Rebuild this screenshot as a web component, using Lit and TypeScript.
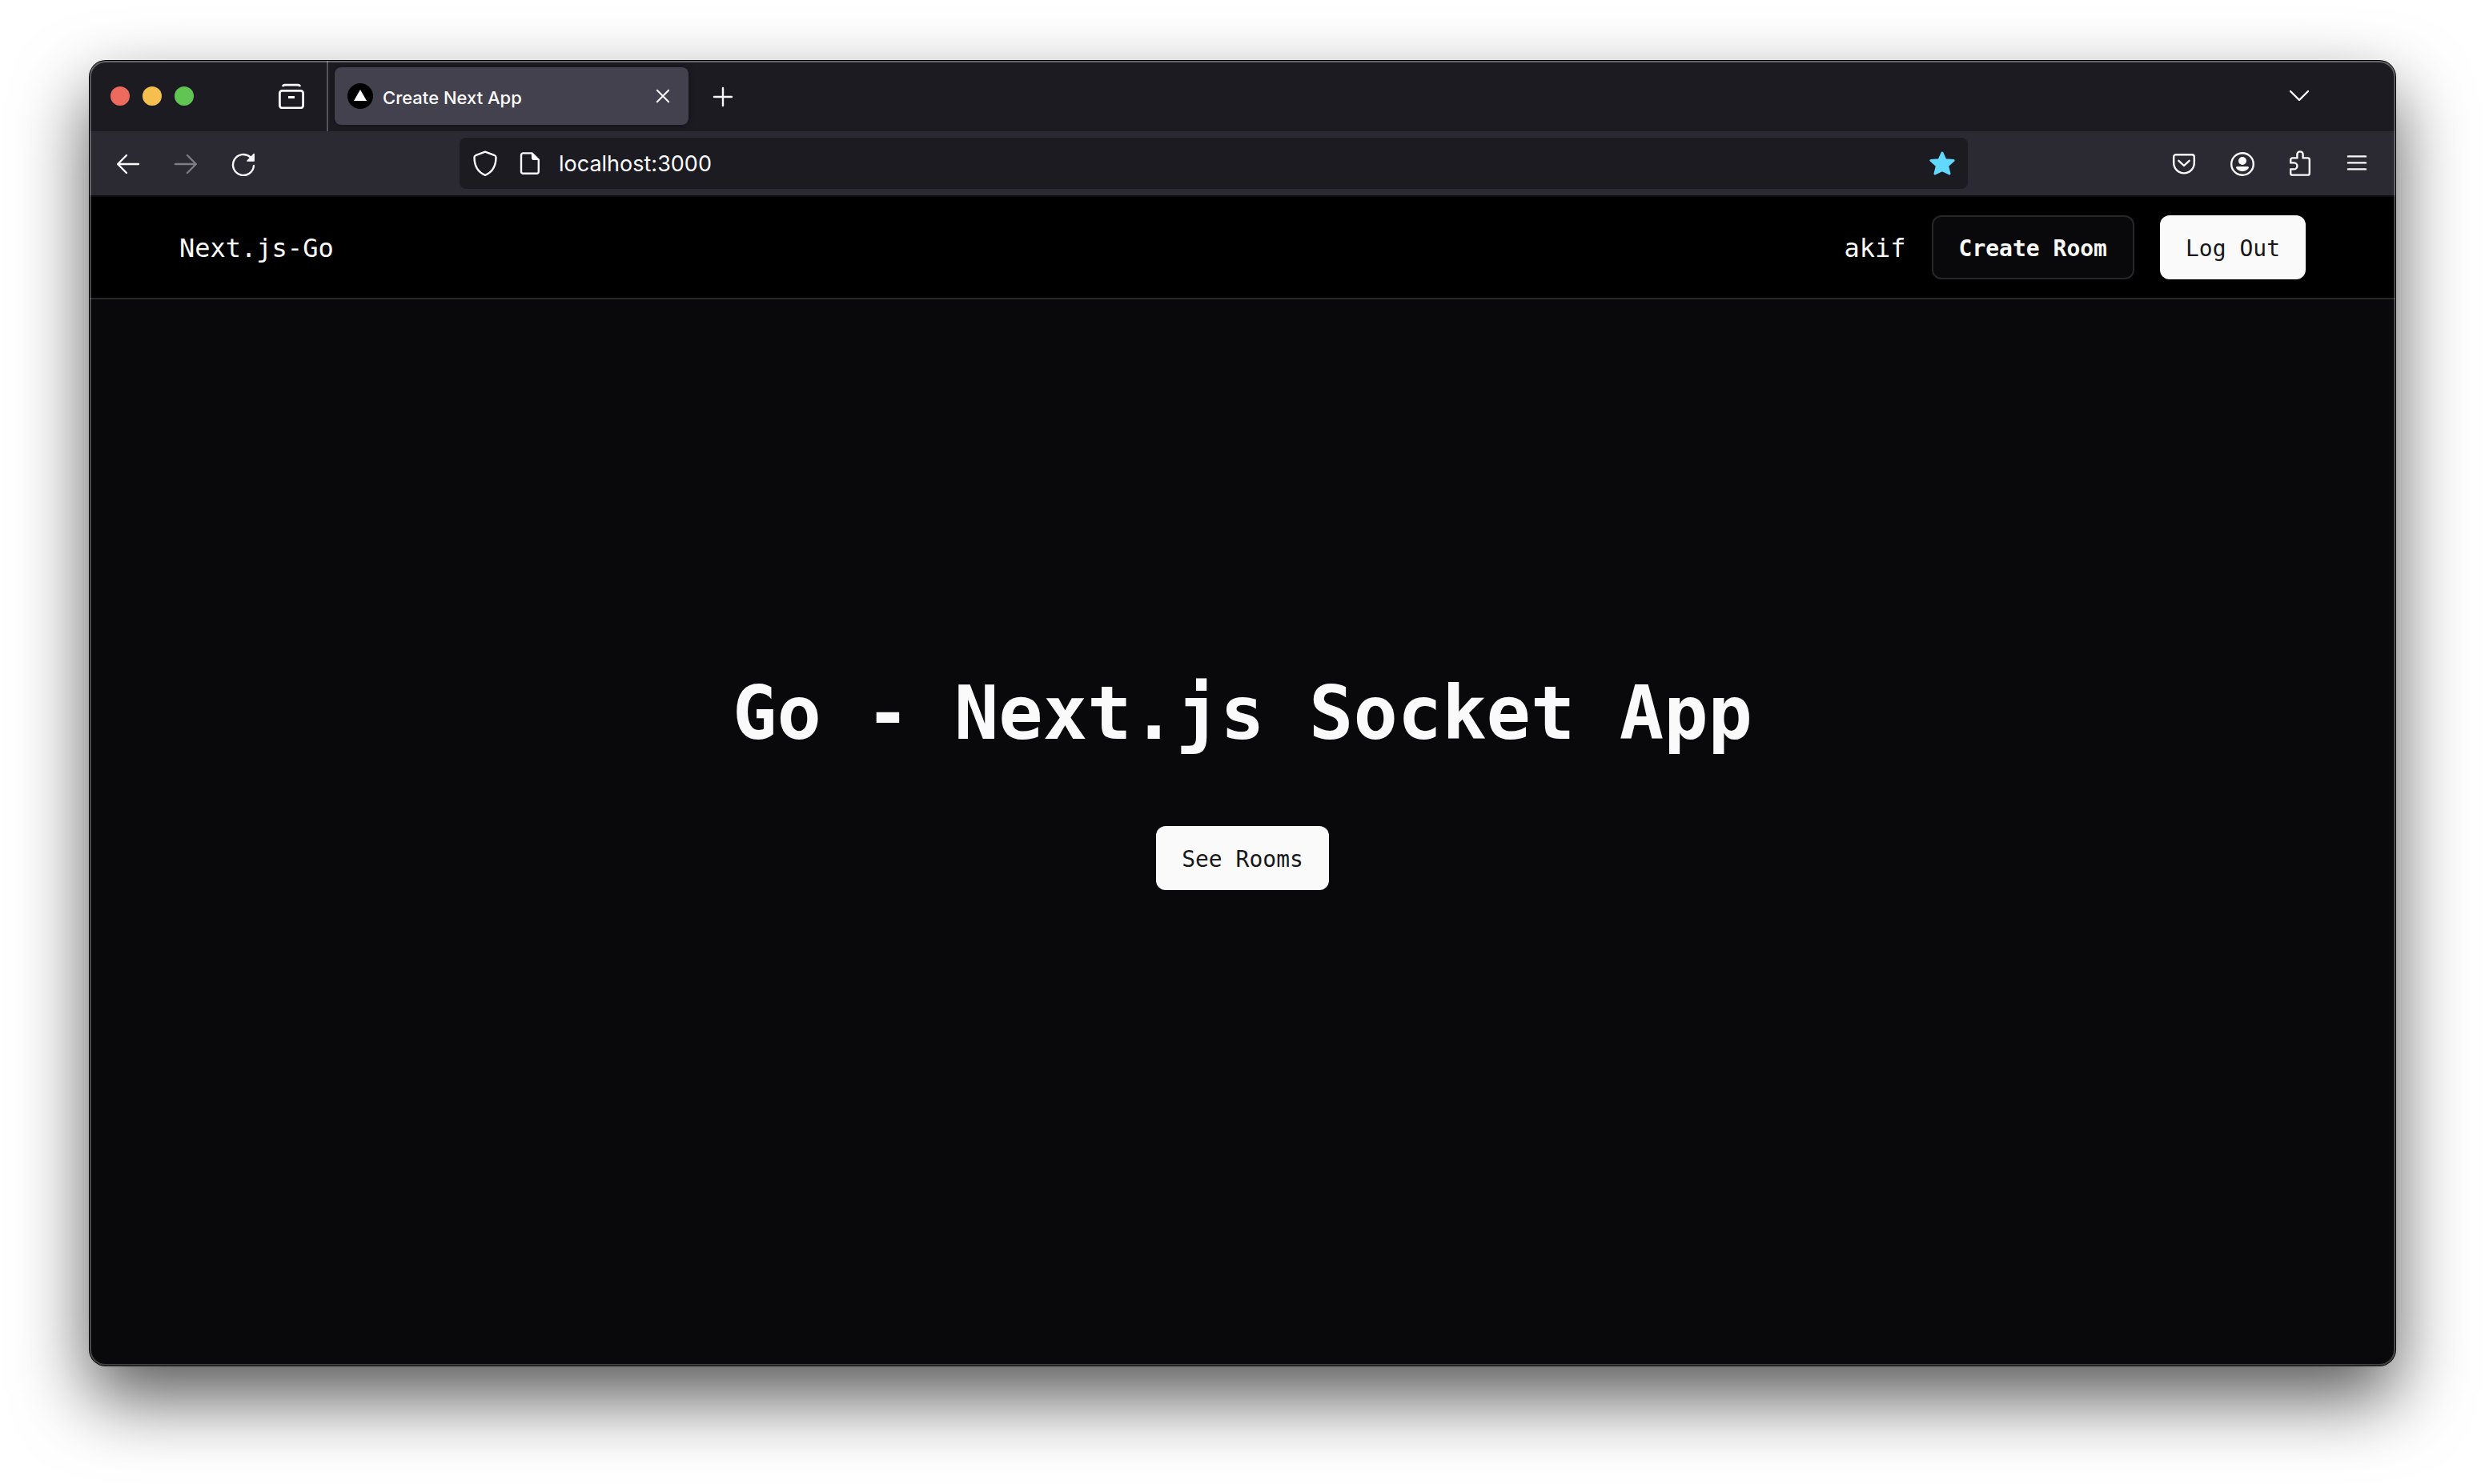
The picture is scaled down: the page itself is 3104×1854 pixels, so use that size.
import { LitElement, html, css, svg } from "lit";
import { customElement } from "lit/decorators.js";

const icon = (body: unknown) => html`
  <svg width="32" height="32" viewBox="0 0 32 32" fill="none" stroke="currentColor"
    stroke-width="2.4" stroke-linecap="round" stroke-linejoin="round" aria-hidden="true">${body}</svg>
`;

const icons = {
  archive: icon(svg`
    <path d="M5.2 4.2Q5.8 2.2 8 2.2H24Q26.2 2.2 26.8 4.2" stroke-linecap="butt" stroke-width="2.8"/>
    <rect x="1.4" y="9.4" width="29.2" height="21.4" rx="3" stroke-width="2.8"/>
    <rect x="12" y="16" width="8" height="3" fill="currentColor" stroke="none"/>`),
  back: icon(svg`<path d="M14 6 3.2 17 14 28M3.2 17H29"/>`),
  forward: icon(svg`<path d="M18 6 28.8 17 18 28M28.8 17H3"/>`),
  reload: icon(svg`
    <path d="M29 19A13 13 0 1 1 24.6 8.2"/>
    <path d="M29.2 4.6V13H21Z" fill="currentColor" stroke-width="1.6"/>`),
  close: icon(svg`<path d="M8.8 8.8 23.2 23.2M23.2 8.8 8.8 23.2" stroke-width="2"/>`),
  plus: icon(svg`<path d="M16 6V28M5 17H27"/>`),
  chevron: icon(svg`<path d="M5 10 16 21 27 10"/>`),
  shield: icon(svg`
    <path d="M16 1.6 28 6.2Q29.6 7 29.5 9C29.3 19.5 25.5 27 16 30.8C6.5 27 2.7 19.5 2.5 9Q2.4 7 4 6.2Z"/>`),
  page: icon(svg`
    <path d="M7.4 3.4H18.5L26.8 11.5V26.4A2.4 2.4 0 0 1 24.4 28.8H7.4A2.4 2.4 0 0 1 5 26.4V5.8A2.4 2.4 0 0 1 7.4 3.4Z"/>
    <path d="M18.5 3.4 26.8 11.5H20A1.5 1.5 0 0 1 18.5 10Z" fill="currentColor" stroke-width="1"/>`),
  star: icon(svg`
    <path d="M16 3 20 11.8 30.2 12.4 22.6 19 25 29 16 24.6 7 29 9.4 19 1.8 12.4 12 11.8Z"
      fill="currentColor" stroke-width="3"/>`),
  pocket: icon(svg`
    <path d="M6 5.2H26A2.8 2.8 0 0 1 28.8 8V15.6A12.8 12.8 0 0 1 3.2 15.6V8A2.8 2.8 0 0 1 6 5.2Z"/>
    <path d="M9.4 12.8 16 19 22.6 12.8"/>`),
  account: icon(svg`
    <circle cx="17" cy="17" r="13.8"/>
    <circle cx="17" cy="13" r="5" fill="currentColor" stroke="none"/>
    <path d="M10.4 20H23.6A1.4 1.4 0 0 1 24.8 22A9.5 9.5 0 0 1 9.2 22A1.4 1.4 0 0 1 10.4 20Z"
      fill="currentColor" stroke="none"/>`),
  puzzle: icon(svg`
    <path d="M5.2 15.4V11.6A2.2 2.2 0 0 1 7.4 9.4H13.4V5A3.6 3.6 0 0 1 20.6 5V9.4H26.6A2.2 2.2 0 0 1 28.8 11.6V28.4A2.2 2.2 0 0 1 26.6 30.6H7.4A2.2 2.2 0 0 1 5.2 28.4V23.4H9.4A4 4 0 0 0 9.4 15.4Z"/>`),
  menu: icon(svg`<path d="M5 7.4H27M5 15.4H27M5 23.4H27"/>`),
};

@customElement("browser-chrome")
class BrowserChrome extends LitElement {
  static styles = css`
    :host {
      display: block;
      color: #fbfbfe;
      font-family: Inter, "Liberation Sans", sans-serif;
    }
    svg { display: block; flex: none; }
    button {
      display: flex;
      align-items: center;
      justify-content: center;
      padding: 0;
      border: 0;
      background: none;
      color: inherit;
      font: inherit;
    }
    .strip {
      display: flex;
      height: 88px;
      background: #1c1b22;
    }
    .controls {
      display: flex;
      align-items: center;
      gap: 16px;
      padding: 0 26px;
    }
    .light { width: 24px; height: 24px; border-radius: 50%; }
    .red { background: #ed6a5e; }
    .yellow { background: #f5bf4f; }
    .green { background: #61c554; }
    .recent { margin-left: 80px; padding-right: 28px; border-right: 2px solid #55545c; }
    .tab {
      display: flex;
      align-items: center;
      gap: 12px;
      width: 442px;
      margin: 8px;
      padding: 0 16px;
      box-sizing: border-box;
      border-radius: 8px;
      background: #42414d;
      box-shadow: 0 0 6px rgba(0, 0, 0, 0.5);
    }
    .label {
      flex: 1;
      justify-content: flex-start;
      padding-top: 4px;
      font-size: 22px;
      font-weight: 500;
      line-height: 28px;
    }
    .new { width: 70px; }
    .list { width: 72px; margin-left: auto; margin-right: 84px; }
    .bar {
      display: flex;
      align-items: center;
      height: 80px;
      padding: 0 12px;
      background: #2b2a33;
      border-bottom: 2px solid #0c0c0d;
    }
    .tool { width: 72px; height: 72px; }
    .tool:disabled { color: #7d7c83; }
    .spring { flex: 117; }
    .address {
      flex: 926;
      display: flex;
      align-items: center;
      gap: 20px;
      height: 64px;
      padding: 0 16px;
      box-sizing: border-box;
      border-radius: 8px;
      background: #1c1b22;
    }
    .identity { display: flex; gap: 24px; }
    .url {
      flex: 1;
      min-width: 0;
      padding: 2px 0 0;
      border: 0;
      outline: 0;
      background: none;
      color: inherit;
      font: 27px/36px Inter, "Liberation Sans", sans-serif;
    }
    .starred { color: #62d8fd; }
  `;

  render() {
    return html`
      <div class="strip">
        <div class="controls">
          <button class="light red" aria-label="Close window"></button>
          <button class="light yellow" aria-label="Minimize"></button>
          <button class="light green" aria-label="Zoom"></button>
        </div>
        <button class="recent" aria-label="Recent browsing">${icons.archive}</button>
        <div class="tab">
          <svg width="32" height="32" viewBox="0 0 32 32" aria-hidden="true">
            <circle cx="16" cy="16" r="16"/><path d="M16 8 24 22H8Z" fill="#fff"/>
          </svg>
          <button class="label">Create Next App</button>
          <button aria-label="Close tab">${icons.close}</button>
        </div>
        <button class="new" aria-label="New tab">${icons.plus}</button>
        <button class="list" aria-label="List all tabs">${icons.chevron}</button>
      </div>
      <div class="bar">
        <button class="tool" aria-label="Back">${icons.back}</button>
        <button class="tool" aria-label="Forward" disabled>${icons.forward}</button>
        <button class="tool" aria-label="Reload">${icons.reload}</button>
        <span class="spring"></span>
        <div class="address">
          <div class="identity">
            <button aria-label="Tracking protection">${icons.shield}</button>
            <button aria-label="Site information">${icons.page}</button>
          </div>
          <input class="url" type="text" aria-label="Address" value="localhost:3000">
          <button class="starred" aria-label="Bookmark">${icons.star}</button>
        </div>
        <span class="spring"></span>
        <button class="tool" aria-label="Pocket">${icons.pocket}</button>
        <button class="tool" aria-label="Account">${icons.account}</button>
        <button class="tool" aria-label="Extensions">${icons.puzzle}</button>
        <button class="tool" aria-label="Menu">${icons.menu}</button>
      </div>
    `;
  }
}

@customElement("socket-page")
class SocketPage extends LitElement {
  static styles = css`
    :host {
      display: flex;
      flex-direction: column;
      background: #09090b;
      color: #fafafa;
      font-family: "DejaVu Sans Mono", monospace;
    }
    .header {
      display: flex;
      align-items: center;
      justify-content: space-between;
      height: 126px;
      padding: 0 112px;
      background: #000;
      border-bottom: 2px solid #27272a;
    }
    .brand, .user {
      padding-top: 2px;
      color: inherit;
      font-size: 32px;
      line-height: 40px;
      text-decoration: none;
    }
    .actions { display: flex; align-items: center; gap: 32px; }
    .button {
      height: 80px;
      padding: 4px 32px 0;
      border: 0;
      border-radius: 12px;
      background: #fafafa;
      color: #18181b;
      font: 28px/40px "DejaVu Sans Mono", monospace;
    }
    .outline {
      border: 2px solid #27272a;
      background: #09090b;
      color: #fafafa;
      font-weight: bold;
    }
    .hero {
      flex: 1;
      display: flex;
      flex-direction: column;
      align-items: center;
      justify-content: center;
      gap: 88px;
      padding: 0 32px 128px;
    }
    .title { margin: 0; font-size: 92px; line-height: 104px; font-weight: bold; text-align: center; }
  `;

  render() {
    return html`
      <header class="header">
        <a class="brand" href="#">Next.js-Go</a>
        <div class="actions">
          <span class="user">akif</span>
          <button class="button outline">Create Room</button>
          <button class="button">Log Out</button>
        </div>
      </header>
      <main class="hero">
        <h1 class="title">Go - Next.js Socket App</h1>
        <button class="button">See Rooms</button>
      </main>
    `;
  }
}

@customElement("app-root")
class AppRoot extends LitElement {
  static styles = css`
    :host {
      display: flex;
      min-height: 100vh;
      box-sizing: border-box;
      padding: 76px 112px 148px;
      overflow: hidden;
      background: #fff;
    }
    .window {
      position: relative;
      flex: 1;
      display: flex;
      flex-direction: column;
      border-radius: 20px;
      background: #09090b;
      box-shadow: 0 0 0 1px #000, 0 40px 90px rgba(0, 0, 0, 0.66);
    }
    .content {
      flex: 1;
      display: flex;
      flex-direction: column;
      overflow: hidden;
      border-radius: inherit;
    }
    .page { flex: 1; }
    .window::after {
      content: "";
      position: absolute;
      inset: 0;
      border-radius: inherit;
      pointer-events: none;
      box-shadow: inset 0 0 0 2px rgba(255, 255, 255, 0.22), inset 0 1px 0 1px rgba(255, 255, 255, 0.14);
    }
  `;

  render() {
    return html`
      <div class="window">
        <div class="content">
          <browser-chrome></browser-chrome>
          <socket-page class="page"></socket-page>
        </div>
      </div>
    `;
  }
}
